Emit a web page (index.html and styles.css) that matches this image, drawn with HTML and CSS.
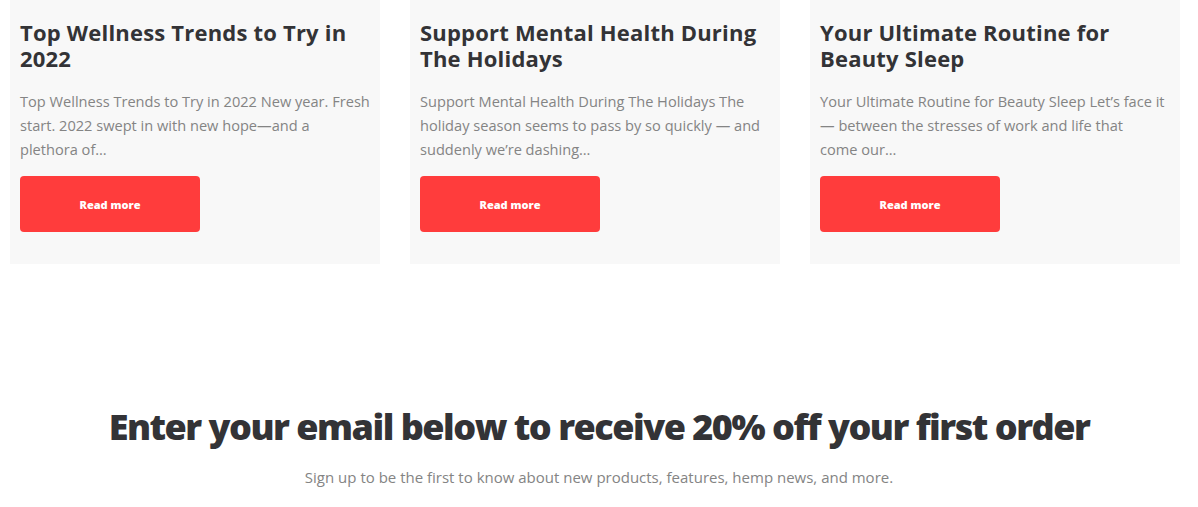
FILE: index.html
```html
<!DOCTYPE html>
<html>
<head>
<meta charset="utf-8">
<link rel="stylesheet" href="styles.css">
</head>
<body>
<main class="page">
  <section class="posts">
    <article class="card">
      <h2 class="card-title">Top Wellness Trends to Try in 2022</h2>
      <p class="card-text">Top Wellness Trends to Try in 2022 New year. Fresh start. 2022 swept in with new hope—and a plethora of…</p>
      <a class="btn" href="#">Read more</a>
    </article>
    <article class="card">
      <h2 class="card-title">Support Mental Health During The Holidays</h2>
      <p class="card-text">Support Mental Health During The Holidays The holiday season seems to pass by so quickly — and suddenly we’re dashing…</p>
      <a class="btn" href="#">Read more</a>
    </article>
    <article class="card">
      <h2 class="card-title">Your Ultimate Routine for Beauty Sleep</h2>
      <p class="card-text">Your Ultimate Routine for Beauty Sleep Let’s face it — between the stresses of work and life that<br>come our…</p>
      <a class="btn" href="#">Read more</a>
    </article>
  </section>
  <section class="signup">
    <h2 class="signup-title">Enter your email below to receive 20% off your first order</h2>
    <p class="signup-text">Sign up to be the first to know about new products, features, hemp news, and more.</p>
  </section>
</main>
</body>
</html>
```

FILE: styles.css
```css
* { box-sizing: border-box; }
html, body { margin: 0; padding: 0; background: #fff; }
body { font-family: "Open Sans", "DejaVu Sans", sans-serif; color: #333336; }
.page { width: 1198px; }
.posts {
  display: grid;
  grid-template-columns: repeat(3, 370px);
  column-gap: 30px;
  padding: 0 10px;
}
.card {
  background: #f8f8f8;
  padding: 19px 10px 32px;
  display: flex;
  flex-direction: column;
  align-items: flex-start;
}
.card-title {
  margin: 0;
  font-size: 22px;
  line-height: 26px;
  font-weight: 700;
  color: #333336;
  letter-spacing: 0.2px;
}
.card-text {
  margin: 18px 0 15px;
  font-size: 14.6px;
  line-height: 24px;
  color: #848484;
}
.btn {
  display: flex;
  align-items: center;
  justify-content: center;
  width: 180px;
  height: 56px;
  background: #ff3c3c;
  border-radius: 4px;
  color: #fff;
  font-size: 11px;
  font-weight: 800;
  text-decoration: none;
}
.signup {
  padding-top: 140px;
  text-align: center;
}
.signup-title {
  margin: 0;
  font-size: 36px;
  line-height: 46px;
  font-weight: 800;
  letter-spacing: -1.5px;
  color: #333336;
}
.signup-text {
  margin: 15px 0 0;
  font-size: 15px;
  line-height: 24px;
  color: #848484;
}
```
